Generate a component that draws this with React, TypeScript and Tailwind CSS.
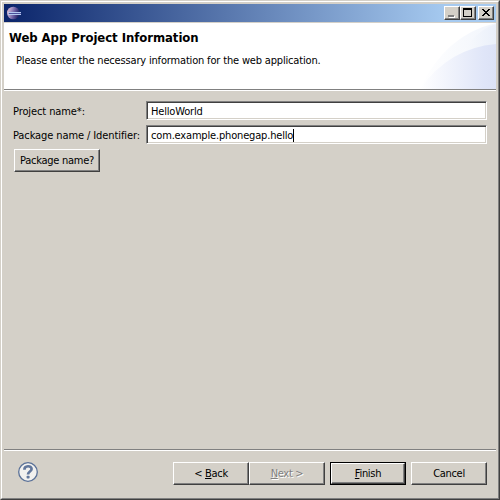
import type { ReactNode } from "react";

const raised =
  "border border-t-white border-l-white border-r-[#404040] border-b-[#404040] shadow-[inset_-1px_-1px_0_#808080] bg-[#d4d0c8]";

function EclipseIcon() {
  return (
    <svg width="16" height="16" viewBox="0 0 16 16" className="ml-[2px]">
      <defs>
        <linearGradient id="moon" x1="0" y1="0" x2="1" y2="0.3">
          <stop offset="0" stopColor="#ecc4cc" />
          <stop offset="0.35" stopColor="#ab98c6" />
          <stop offset="0.7" stopColor="#62579c" />
          <stop offset="1" stopColor="#2a2768" />
        </linearGradient>
      </defs>
      <circle cx="7.3" cy="8" r="6.3" fill="url(#moon)" />
      <path d="M2 7.5h13M2 9.5h13" stroke="#b4c9f0" strokeWidth="1" />
      <path d="M3 8.5h12" stroke="#4c519a" strokeWidth="1" />
    </svg>
  );
}

function CaptionButton({ children, className = "" }: { children: ReactNode; className?: string }) {
  return (
    <button className={`h-[14px] w-4 ${raised} ${className}`}>
      <svg width="14" height="12" viewBox="0 0 14 12" shapeRendering="crispEdges" className="block">
        {children}
      </svg>
    </button>
  );
}

function TitleBar() {
  return (
    <div className="flex h-[18px] items-center bg-linear-to-r/srgb from-[#0a246a] to-[#a6caf0] to-90% pr-[2px]">
      <EclipseIcon />
      <div className="flex-1" />
      <CaptionButton>
        <path d="M4 9h6v2h-6z" fill="#fff" />
        <path d="M3 8h6v2h-6z" fill="#808080" />
      </CaptionButton>
      <CaptionButton>
        <path fillRule="evenodd" d="M2 1h9v9h-9zM3 3v6h7v-6z" fill="#000" />
      </CaptionButton>
      <CaptionButton className="ml-[2px]">
        <path
          d="M3 2h2v1h1v1h2v-1h1v-1h2v1h-1v1h-1v1h-1v1h1v1h1v1h1v1h-2v-1h-1v-1h-2v1h-1v1h-2v-1h1v-1h1v-1h1v-1h-1v-1h-1v-1h-1z"
          fill="#000"
        />
      </CaptionButton>
    </div>
  );
}

function Banner() {
  return (
    <div className="relative mt-px h-[68px] border-b border-white bg-white">
      <div className="flex h-[67px] flex-col border-b border-[#808080] whitespace-nowrap">
        <svg width="76" height="66" viewBox="0 0 76 66" className="absolute top-0 right-0">
          <defs>
            <linearGradient id="outer">
              <stop offset="0" stopColor="#fff" />
              <stop offset="1" stopColor="#e8eef9" />
            </linearGradient>
            <linearGradient id="inner">
              <stop offset="0" stopColor="#fff" />
              <stop offset="0.85" stopColor="#dfe5f8" />
              <stop offset="1" stopColor="#dce2f6" />
            </linearGradient>
          </defs>
          <path d="M0 66Q25 12 76 0V66Z" fill="url(#outer)" opacity="0.6" />
          <path d="M31 50Q48 10 76 1V66H31Z" fill="url(#outer)" opacity="0.8" />
          <path d="M0 66Q29 25 76 21V66Z" fill="url(#inner)" />
        </svg>
        <h1 className="relative mt-[7px] ml-[5px] text-[13px] leading-4 font-bold tracking-[-0.06px]">Web App Project Information</h1>
        <p className="relative mt-[7px] ml-3 leading-4 tracking-[-0.17px]">Please enter the necessary information for the web application.</p>
      </div>
    </div>
  );
}

function Field({ label, value, caret }: { label: string; value: string; caret?: boolean }) {
  return (
    <div className="flex h-[19px] items-center">
      <label className="w-[133px] pt-[3px] leading-4 tracking-[-0.1px] whitespace-nowrap">{label}</label>
      <div className="flex h-[19px] w-[341px] items-center border border-t-[#808080] border-r-white border-b-white border-l-[#808080] bg-white pl-1 shadow-[inset_1px_1px_0_#404040,inset_-1px_-1px_0_#d4d0c8]">
        <span className="pt-[3px] leading-[14px]">{value}</span>
        {caret && <i className="mt-px h-[13px] w-px bg-black" />}
      </div>
    </div>
  );
}

function PushButton({ children, className = "" }: { children: ReactNode; className?: string }) {
  return (
    <button className={`flex h-[23px] w-[76px] items-center justify-center whitespace-nowrap ${raised} ${className}`}>
      <span className="pt-[2px]">{children}</span>
    </button>
  );
}

function HelpIcon() {
  return (
    <svg width="22" height="22" viewBox="0 0 22 22" className="mt-[10px] ml-[13px] self-start">
      <circle cx="11" cy="11" r="9.3" fill="#f2f1ef" stroke="#5a7198" strokeWidth="1.3" />
      <path d="M7.4 8.8C7.4 4.2 14.6 4.2 14.6 8C14.6 10.6 11 10.4 11 13.4" fill="none" stroke="#62779c" strokeWidth="2.7" />
      <rect x="9.6" y="14.7" width="3" height="2.8" rx="0.8" fill="#62779c" />
    </svg>
  );
}

export default function App() {
  return (
    <div className="h-[500px] w-[500px] overflow-hidden border border-t-[#d4d0c8] border-r-[#404040] border-b-[#404040] border-l-[#d4d0c8] bg-[#d4d0c8] font-['DejaVu_Sans_Condensed','DejaVu_Sans',sans-serif] text-[11px] text-black">
      <div className="flex h-[498px] flex-col border border-t-white border-r-[#808080] border-b-[#808080] border-l-white px-[2px] pt-[2px]">
        <TitleBar />
        <Banner />
        <main className="flex h-[358px] flex-col gap-[5px] pt-[10px] pl-[9px] tracking-[-0.17px]">
          <Field label="Project name*:" value="HelloWorld" />
          <Field label="Package name / Identifier:" value="com.example.phonegap.hello" caret />
          <PushButton className="ml-px w-[86px]! tracking-[-0.27px]">Package name?</PushButton>
        </main>
        <div className="h-[2px] border-t border-[#808080] bg-white" />
        <footer className="flex h-[45px] items-center tracking-[-0.3px]">
          <HelpIcon />
          <div className="ml-[134px] flex">
            <PushButton>&lt; <u>B</u>ack</PushButton>
            <PushButton className="text-[#808080] [text-shadow:1px_1px_0_white]"><u>N</u>ext &gt;</PushButton>
          </div>
          <div className="ml-[5px] border border-black">
            <PushButton className="h-[21px]! w-[74px]!"><u>F</u>inish</PushButton>
          </div>
          <PushButton className="ml-[5px]">Cancel</PushButton>
        </footer>
      </div>
    </div>
  );
}
